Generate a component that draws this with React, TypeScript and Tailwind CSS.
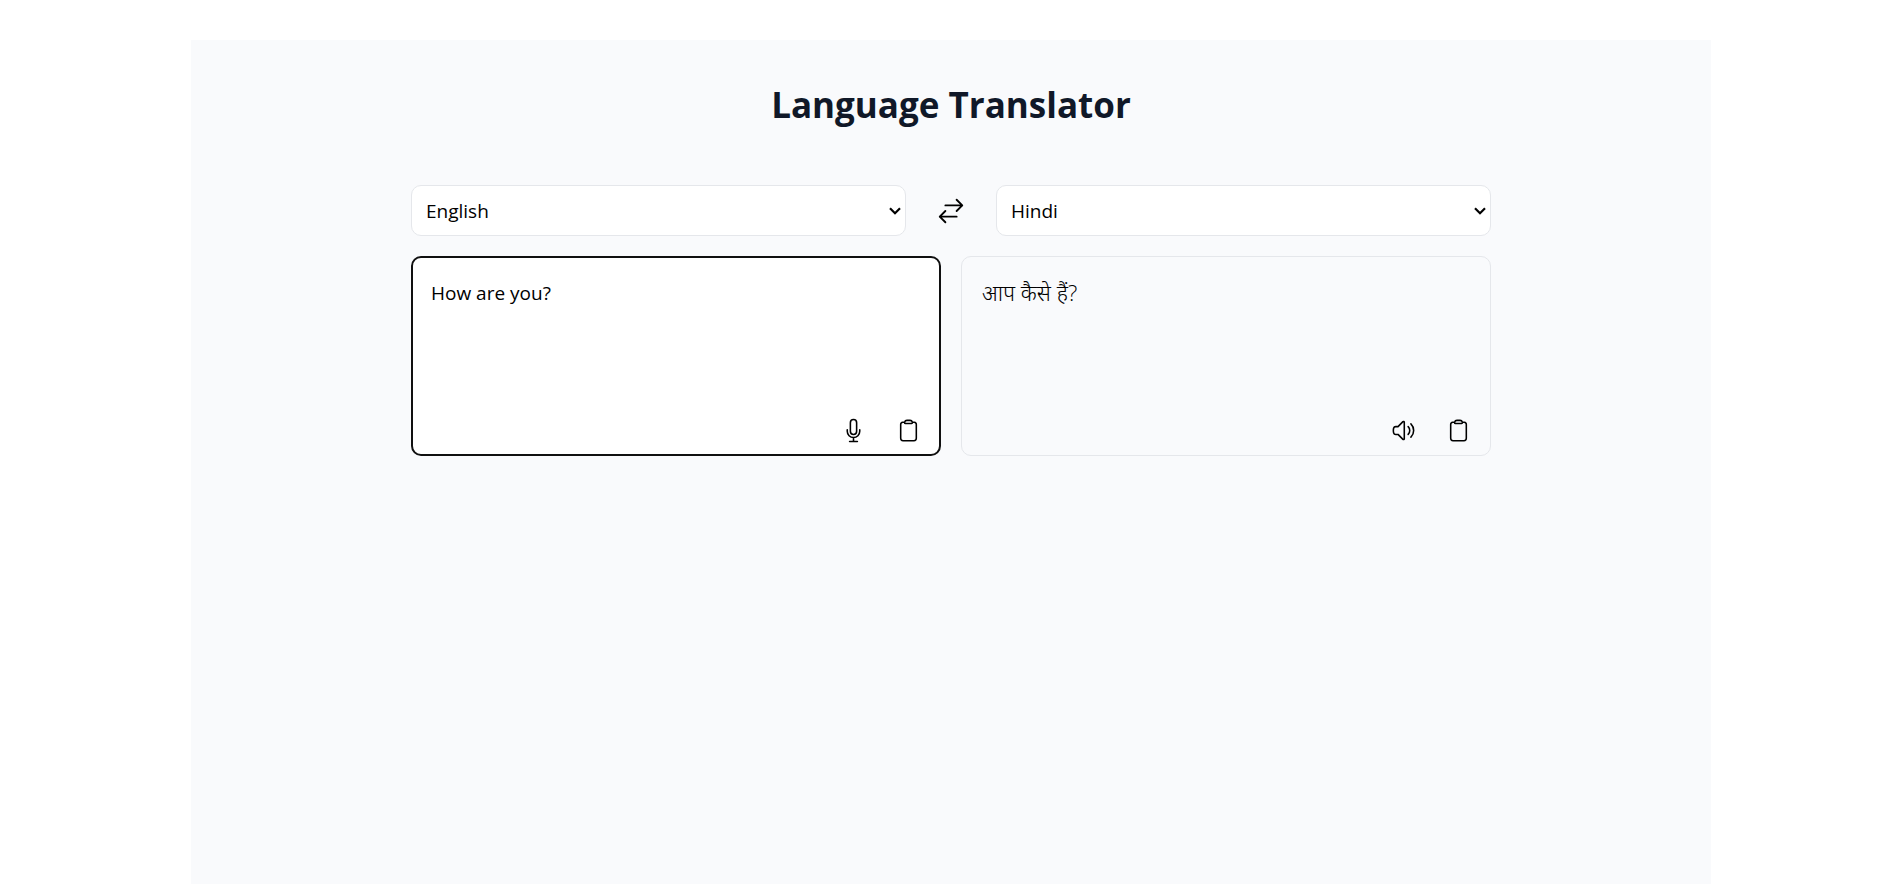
import { useState } from "react";
import {
  HiOutlineArrowsRightLeft,
  HiOutlineClipboard,
  HiOutlineMicrophone,
  HiOutlineSpeakerWave,
} from "react-icons/hi2";

const languages = ["English", "Hindi", "Spanish", "French", "German"];

type LanguageSelectProps = {
  label: string;
  value: string;
  onChange: (value: string) => void;
};

function LanguageSelect({ label, value, onChange }: LanguageSelectProps) {
  return (
    <div className="relative min-w-0 flex-1">
      <select
        aria-label={label}
        value={value}
        onChange={(e) => onChange(e.target.value)}
        className="block h-[51px] w-full appearance-none rounded-[10px] border border-gray-200 bg-white px-[14px] pt-[2px] text-[19px] text-black"
      >
        {languages.map((language) => (
          <option key={language}>{language}</option>
        ))}
      </select>
      <svg
        aria-hidden="true"
        viewBox="0 0 12 8"
        className="pointer-events-none absolute top-[22px] right-[5px] h-2 w-3"
        fill="none"
        stroke="currentColor"
        strokeWidth="2.2"
      >
        <path d="M1 1.2 6 6.2l5-5" />
      </svg>
    </div>
  );
}

export default function App() {
  const [source, setSource] = useState("English");
  const [target, setTarget] = useState("Hindi");
  const [text, setText] = useState("How are you?");

  const swap = () => {
    setSource(target);
    setTarget(source);
  };

  return (
    <div className="flex min-h-screen flex-col bg-white px-5 pt-10 font-['Segoe_UI','Open_Sans','Noto_Sans',sans-serif] text-black">
      <main className="mx-auto w-full max-w-[1520px] flex-1 bg-[#f9fafc] px-5 pt-10">
        <h1 className="text-center text-[35px] leading-[50px] font-bold text-gray-900">Language Translator</h1>
        <div className="mx-auto mt-[55px] flex max-w-[1080px] flex-col gap-5">
          <div className="flex items-center">
            <LanguageSelect label="Source language" value={source} onChange={setSource} />
            <button type="button" aria-label="Swap languages" onClick={swap} className="flex w-[90px] justify-center">
              <HiOutlineArrowsRightLeft size={30} />
            </button>
            <LanguageSelect label="Target language" value={target} onChange={setTarget} />
          </div>
          <div className="grid grid-cols-2 gap-5">
            <div className="flex h-[200px] flex-col rounded-[10px] border-2 border-[#101010] bg-white px-[18px] pt-5">
              <textarea
                aria-label="Text to translate"
                value={text}
                onChange={(e) => setText(e.target.value)}
                className="w-full flex-1 resize-none bg-transparent text-[19px] leading-[30px] outline-none"
              />
              <div className="flex justify-end gap-[30px] pb-[11px]">
                <button type="button" aria-label="Speak">
                  <HiOutlineMicrophone size={25} />
                </button>
                <button type="button" aria-label="Copy source text">
                  <HiOutlineClipboard size={25} />
                </button>
              </div>
            </div>
            <div className="flex h-[200px] flex-col rounded-[10px] border border-gray-200 pt-5 pr-[19px] pl-5">
              <p lang="hi" className="flex-1 text-[22px] leading-[30px] font-light">
                आप कैसे हैं?
              </p>
              <div className="flex justify-end gap-[30px] pb-3">
                <button type="button" aria-label="Listen">
                  <HiOutlineSpeakerWave size={25} />
                </button>
                <button type="button" aria-label="Copy translation">
                  <HiOutlineClipboard size={25} />
                </button>
              </div>
            </div>
          </div>
        </div>
      </main>
    </div>
  );
}
